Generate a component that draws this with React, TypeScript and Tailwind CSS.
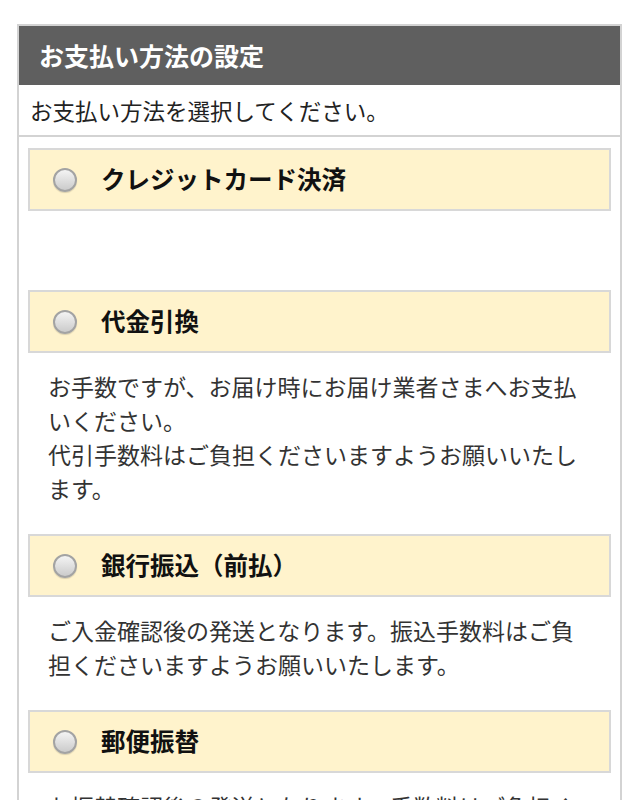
import React, { useState } from 'react';

type Method = {
    id: string;
    label: string;
    lines: string[];
};

const methods: Method[] = [
    { id: 'credit', label: 'クレジットカード決済', lines: [] },
    {
        id: 'cod',
        label: '代金引換',
        lines: [
            'お手数ですが、お届け時にお届け業者さまへお支払いください。',
            '代引手数料はご負担くださいますようお願いいたします。',
        ],
    },
    {
        id: 'bank',
        label: '銀行振込（前払）',
        lines: ['ご入金確認後の発送となります。振込手数料はご負担くださいますようお願いいたします。'],
    },
    {
        id: 'postal',
        label: '郵便振替',
        lines: ['お振替確認後の発送となります。手数料はご負担くださいますようお願いいたします。'],
    },
];

function Radio({ checked }: { checked: boolean }) {
    return (
        <span className="flex items-center justify-center w-[24px] h-[24px] rounded-full border-2 border-[#a3a3a3] bg-gradient-to-b from-[#f4f4f4] to-[#cbcbcb] shadow-[0_1px_1px_rgba(0,0,0,0.15)]">
            {checked && <span className="w-[9px] h-[9px] rounded-full bg-[#333]" />}
        </span>
    );
}

export default function App() {
    const [selected, setSelected] = useState('');

    return (
        <div className="min-h-screen bg-white pt-[24px] font-['Noto_Sans_CJK_JP',sans-serif]">
            <div className="ml-[17px] w-[605px] border-2 border-[#d3d3d3]">

                {/* Header */}
                <div className="flex items-center h-[59px] px-[20px] bg-[#5f5f5f]">
                    <h2 className="text-[25px] font-bold text-white leading-none">お支払い方法の設定</h2>
                </div>

                <div className="flex items-center h-[52px] px-[11px] border-b-2 border-[#d3d3d3]">
                    <p className="text-[22.5px] text-[#222] leading-none">お支払い方法を選択してください。</p>
                </div>

                {/* Methods */}
                <div className="pt-[11px]">
                    {methods.map((m) => (
                        <div key={m.id}>
                            <button
                                type="button"
                                onClick={() => setSelected(m.id)}
                                className="mx-[9px] flex items-center w-[583px] h-[63px] pl-[23px] border-2 border-[#d8d8d8] bg-[#fff3cc] text-left"
                            >
                                <Radio checked={selected === m.id} />
                                <span className="ml-[24px] text-[24.5px] font-bold text-[#111] leading-none">{m.label}</span>
                            </button>
                            <div className="pt-[16px] pb-[29px] pl-[29px] pr-[34px] text-[23px] leading-[34px] text-[#333]">
                                {m.lines.length === 0 ? (
                                    <div className="h-[34px]" />
                                ) : (
                                    m.lines.map((line, i) => <p key={i}>{line}</p>)
                                )}
                            </div>
                        </div>
                    ))}
                </div>
            </div>
        </div>
    );
}
